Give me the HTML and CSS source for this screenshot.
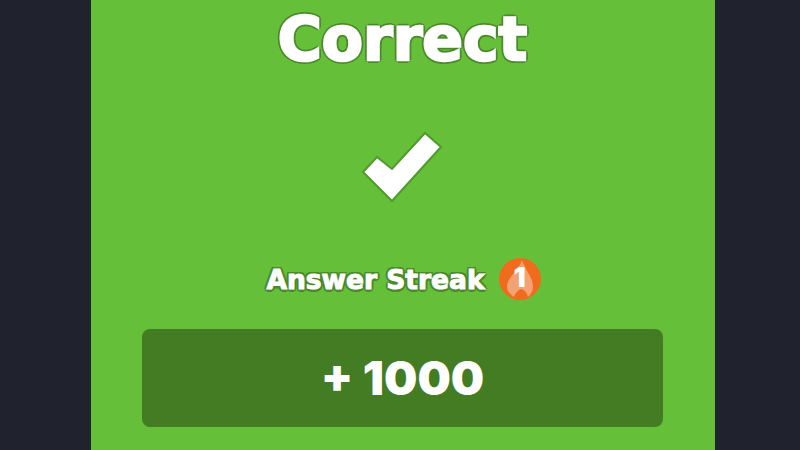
FILE: index.html
```html
<!DOCTYPE html>
<html>
	<head>
		<meta charset="utf-8">
		<title>Correct</title>
		<link rel="stylesheet" href="styles.css">
	</head>
	<body>
		<div class="panel">
			<h1 class="title">Correct</h1>
			<svg class="check" width="84" height="74" viewBox="0 0 84 74">
				<polygon points="16,26 31,38 64,2 80,16 31,70 2,41" fill="#fff" stroke="#4f9a2c" stroke-width="2"/>
			</svg>
			<div class="streak">
				<span class="streak-label">Answer Streak</span>
				<span class="streak-badge">
					<svg width="42" height="42" viewBox="0 0 42 42">
						<circle cx="21" cy="21" r="21" fill="#f06c1c"/>
						<path d="M23 2C25 10 34 20 34 28C34 33 32 36 29 39C28 35 26 32 22 31C19 32 16 35 15 39C11 36 8 33 8 28C8 20 20 12 23 2Z" fill="#f3a274"/>
					</svg>
					<span class="streak-num">1</span>
				</span>
			</div>
			<div class="score">+ 1000</div>
		</div>
	</body>
</html>
```

FILE: styles.css
```css
* {margin:0; padding:0; box-sizing:border-box; }
body{
	width:800px;
	height:450px;
	overflow:hidden;
	background:#20232e;
	font-family:"Inter","Liberation Sans",sans-serif;
	color:#fff;
}
.panel{
	width:624px;
	height:450px;
	margin-left:91px;
	background:#66bf39;
	display:flex;
	flex-direction:column;
	align-items:center;
}
.title{
	height:80px;
	margin-left:-1px;
	padding-top:3px;
	font-family:"DejaVu Sans",sans-serif;
	font-size:60px;
	line-height:72px;
	font-weight:700;
	-webkit-text-stroke:2.5px #fff;
	text-shadow:3px 0 #4a8a2a,-3px 0 #4a8a2a,0 3px #4a8a2a,0 -3px #4a8a2a,2.2px 2.2px #4a8a2a,-2.2px 2.2px #4a8a2a,2.2px -2.2px #4a8a2a,-2.2px -2.2px #4a8a2a;
}
.check{
	margin-top:51px;
	margin-left:-1px;
	display:block;
}
.streak{
	margin-top:52px;
	margin-left:1px;
	height:44px;
	display:flex;
	align-items:center;
	gap:14px;
}
.streak-label{
	font-family:"DejaVu Sans",sans-serif;
	font-size:26.5px;
	font-weight:700;
	-webkit-text-stroke:1px #fff;
	text-shadow:2.5px 0 #4a8a2a,-2.5px 0 #4a8a2a,0 2.5px #4a8a2a,0 -2px #4a8a2a,1.8px 1.8px #4a8a2a,-1.8px 1.8px #4a8a2a,1.8px -1.8px #4a8a2a,-1.8px -1.8px #4a8a2a;
}
.streak-badge{
	position:relative;
	width:42px;
	height:42px;
}
.streak-badge svg{display:block; }
.streak-num{
	position:absolute;
	top:0;
	left:0;
	width:42px;
	text-align:center;
	font-size:27px;
	line-height:40px;
	font-weight:900;
}
.score{
	width:521px;
	height:98px;
	margin-top:28px;
	margin-left:-1px;
	background:#447c24;
	border-radius:8px;
	text-align:center;
	font-size:47px;
	line-height:98px;
	font-weight:900;
}
```
